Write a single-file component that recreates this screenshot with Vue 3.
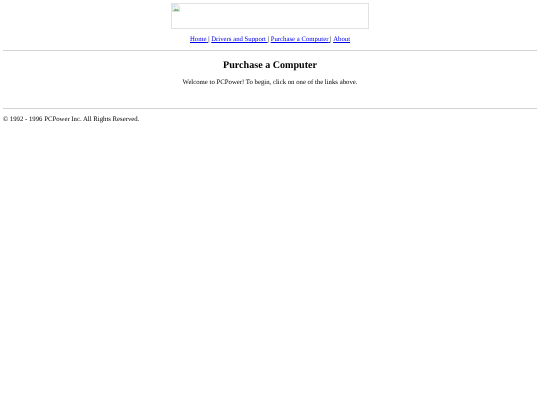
<script setup>
const links = ['Home', 'Drivers and Support', 'Purchase a Computer', 'About'];
</script>

<template>
  <div class="page">
    <header class="top">
      <div class="logo">
        <svg class="broken" width="8" height="8" viewBox="0 0 8 8">
          <path d="M0.5 0.5H5.5L7.5 2.5V7.5H0.5Z" fill="#eef1f3" stroke="#cfd2d5" stroke-width="0.6" />
          <path d="M1 7L3.2 4.4L4.6 5.6L5.6 4.8L7 6.6V7Z" fill="#7dbb7d" />
          <circle cx="2.5" cy="2.4" r="0.8" fill="#bcd6ee" />
        </svg>
      </div>
      <nav class="nav">
        <template v-for="(link, i) in links" :key="link">
          <a href="#">{{ link }}<template v-if="i < links.length - 1">&nbsp;</template></a><template v-if="i < links.length - 1">|&nbsp;</template>
        </template>
      </nav>
    </header>
    <hr />
    <main class="content">
      <h2>Purchase a Computer</h2>
      <p>Welcome to PCPower! To begin, click on one of the links above.</p>
    </main>
    <hr />
    <footer class="foot">© 1992 - 1996 PCPower Inc. All Rights Reserved.</footer>
  </div>
</template>

<style>
html,
body {
  background: #fff;
}
</style>

<style scoped>
/* the reference is a downscaled capture, so everything is a little soft */
.page {
  padding: 3px 3px 0;
  font-family: "Liberation Serif", serif;
  font-size: 6.75px;
  line-height: 8px;
  color: #000;
  text-rendering: geometricPrecision;
  filter: blur(0.3px);
}

.top {
  display: flex;
  flex-direction: column;
  align-items: center;
}

.logo {
  box-sizing: border-box;
  width: 198px;
  height: 26px;
  border: 1px solid #e2e2e2;
}

.broken {
  display: block;
}

.nav {
  margin-top: 7px;
}

.nav a {
  color: #0000ee;
}

hr {
  margin: 6px 0 0;
  border: 0;
  border-top: 1px solid #d2d2d2;
}

.content {
  text-align: center;
}

h2 {
  margin: 9px 0 0;
  font-size: 10.1px;
  line-height: 12px;
  font-weight: bold;
}

p {
  margin: 7px 0 0;
}

.content + hr {
  margin-top: 21px;
}

.foot {
  margin-top: 7px;
}
</style>
